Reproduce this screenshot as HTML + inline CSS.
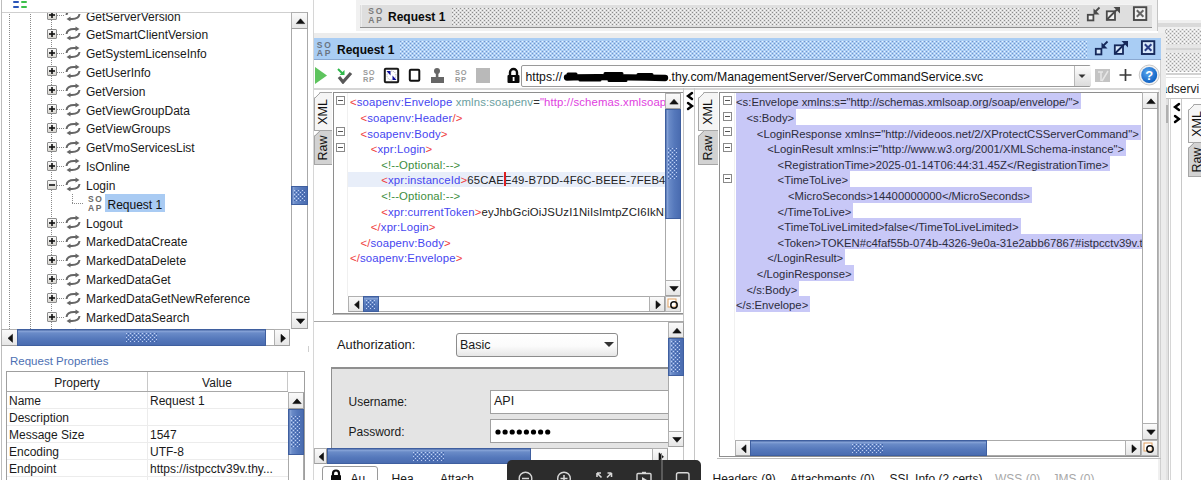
<!DOCTYPE html><html><head><meta charset="utf-8"><style>
html,body{margin:0;padding:0;width:1201px;height:480px;overflow:hidden;background:#fff;}
body{position:relative;font-family:"Liberation Sans",sans-serif;}
.r{position:absolute;}
.t{position:absolute;white-space:nowrap;}
.grip{background-image:radial-gradient(circle at 1px 1px,rgba(255,255,255,0.75) 0.7px,transparent 1px);background-size:3px 3px;}
</style></head><body>
<div class="r" style="left:0px;top:0px;width:313px;height:480px;background:#fff;"></div>
<div class="r" style="left:1px;top:0px;width:1px;height:480px;background:#bdbdbd;"></div>
<div class="r" style="left:13px;top:1px;width:6px;height:2px;background:#2a55b8;border-radius:1px;"></div>
<div class="r" style="left:21px;top:1px;width:6px;height:2px;background:#3cc04a;border-radius:1px;"></div>
<div class="r" style="left:13px;top:5.5px;width:6px;height:2px;background:#2a55b8;border-radius:1px;"></div>
<div class="r" style="left:21px;top:5.5px;width:6px;height:2px;background:#3cc04a;border-radius:1px;"></div>
<div class="r" style="left:2px;top:12px;width:289px;height:1px;background:#cfcfcf;"></div>
<div class="r" style="left:2px;top:13px;width:289px;height:316px;overflow:hidden;">
<div class="r" style="left:7px;top:-13px;width:1px;height:340px;background:repeating-linear-gradient(#8a8a8a 0 1px,transparent 1px 2px);"></div>
<div class="r" style="left:28px;top:-13px;width:1px;height:340px;background:repeating-linear-gradient(#8a8a8a 0 1px,transparent 1px 2px);"></div>
<div class="r" style="left:49px;top:-13px;width:1px;height:340px;background:repeating-linear-gradient(#8a8a8a 0 1px,transparent 1px 2px);"></div>
<div class="r" style="left:45px;top:-3px;width:10px;height:10px;background:linear-gradient(#fafafa,#d8d6d0);border:1px solid #8c8c8c;border-radius:1px;box-sizing:border-box;"></div>
<svg class="r" style="left:45px;top:-3px;" width="10" height="10" viewBox="0 0 10 10"><path d="M2,5 H8" stroke="#111" stroke-width="1.6"/><path d="M5,2 V8" stroke="#111" stroke-width="1.6"/></svg>
<div class="r" style="left:55px;top:2px;width:8px;height:1px;background:repeating-linear-gradient(90deg,#8a8a8a 0 1px,transparent 1px 2px);"></div>
<svg class="r" style="left:63px;top:-5.625px;" width="16" height="15" viewBox="0 0 16 15"><path d="M1.5,8 C2,4 5,3 9,3 L11,3" stroke="#666" stroke-width="2" fill="none"/><polygon points="10.5,0.5 14.5,3 10.5,5.5" fill="#666"/><path d="M14.5,7 C14,11 11,12 7,12 L5,12" stroke="#666" stroke-width="2" fill="none"/><polygon points="5.5,9.5 1.5,12 5.5,14.5" fill="#666"/></svg>
<div class="t" style="left:84px;top:-2.48px;font-size:12px;line-height:12px;color:#1a1a1a;">GetServerVersion</div>
<div class="r" style="left:45px;top:16px;width:10px;height:10px;background:linear-gradient(#fafafa,#d8d6d0);border:1px solid #8c8c8c;border-radius:1px;box-sizing:border-box;"></div>
<svg class="r" style="left:45px;top:16px;" width="10" height="10" viewBox="0 0 10 10"><path d="M2,5 H8" stroke="#111" stroke-width="1.6"/><path d="M5,2 V8" stroke="#111" stroke-width="1.6"/></svg>
<div class="r" style="left:55px;top:21px;width:8px;height:1px;background:repeating-linear-gradient(90deg,#8a8a8a 0 1px,transparent 1px 2px);"></div>
<svg class="r" style="left:63px;top:13.25px;" width="16" height="15" viewBox="0 0 16 15"><path d="M1.5,8 C2,4 5,3 9,3 L11,3" stroke="#666" stroke-width="2" fill="none"/><polygon points="10.5,0.5 14.5,3 10.5,5.5" fill="#666"/><path d="M14.5,7 C14,11 11,12 7,12 L5,12" stroke="#666" stroke-width="2" fill="none"/><polygon points="5.5,9.5 1.5,12 5.5,14.5" fill="#666"/></svg>
<div class="t" style="left:84px;top:16.34px;font-size:12px;line-height:12px;color:#1a1a1a;">GetSmartClientVersion</div>
<div class="r" style="left:45px;top:35px;width:10px;height:10px;background:linear-gradient(#fafafa,#d8d6d0);border:1px solid #8c8c8c;border-radius:1px;box-sizing:border-box;"></div>
<svg class="r" style="left:45px;top:35px;" width="10" height="10" viewBox="0 0 10 10"><path d="M2,5 H8" stroke="#111" stroke-width="1.6"/><path d="M5,2 V8" stroke="#111" stroke-width="1.6"/></svg>
<div class="r" style="left:55px;top:40px;width:8px;height:1px;background:repeating-linear-gradient(90deg,#8a8a8a 0 1px,transparent 1px 2px);"></div>
<svg class="r" style="left:63px;top:32.125px;" width="16" height="15" viewBox="0 0 16 15"><path d="M1.5,8 C2,4 5,3 9,3 L11,3" stroke="#666" stroke-width="2" fill="none"/><polygon points="10.5,0.5 14.5,3 10.5,5.5" fill="#666"/><path d="M14.5,7 C14,11 11,12 7,12 L5,12" stroke="#666" stroke-width="2" fill="none"/><polygon points="5.5,9.5 1.5,12 5.5,14.5" fill="#666"/></svg>
<div class="t" style="left:84px;top:35.16px;font-size:12px;line-height:12px;color:#1a1a1a;">GetSystemLicenseInfo</div>
<div class="r" style="left:45px;top:53px;width:10px;height:10px;background:linear-gradient(#fafafa,#d8d6d0);border:1px solid #8c8c8c;border-radius:1px;box-sizing:border-box;"></div>
<svg class="r" style="left:45px;top:53px;" width="10" height="10" viewBox="0 0 10 10"><path d="M2,5 H8" stroke="#111" stroke-width="1.6"/><path d="M5,2 V8" stroke="#111" stroke-width="1.6"/></svg>
<div class="r" style="left:55px;top:59px;width:8px;height:1px;background:repeating-linear-gradient(90deg,#8a8a8a 0 1px,transparent 1px 2px);"></div>
<svg class="r" style="left:63px;top:51.0px;" width="16" height="15" viewBox="0 0 16 15"><path d="M1.5,8 C2,4 5,3 9,3 L11,3" stroke="#666" stroke-width="2" fill="none"/><polygon points="10.5,0.5 14.5,3 10.5,5.5" fill="#666"/><path d="M14.5,7 C14,11 11,12 7,12 L5,12" stroke="#666" stroke-width="2" fill="none"/><polygon points="5.5,9.5 1.5,12 5.5,14.5" fill="#666"/></svg>
<div class="t" style="left:84px;top:53.98px;font-size:12px;line-height:12px;color:#1a1a1a;">GetUserInfo</div>
<div class="r" style="left:45px;top:72px;width:10px;height:10px;background:linear-gradient(#fafafa,#d8d6d0);border:1px solid #8c8c8c;border-radius:1px;box-sizing:border-box;"></div>
<svg class="r" style="left:45px;top:72px;" width="10" height="10" viewBox="0 0 10 10"><path d="M2,5 H8" stroke="#111" stroke-width="1.6"/><path d="M5,2 V8" stroke="#111" stroke-width="1.6"/></svg>
<div class="r" style="left:55px;top:77px;width:8px;height:1px;background:repeating-linear-gradient(90deg,#8a8a8a 0 1px,transparent 1px 2px);"></div>
<svg class="r" style="left:63px;top:69.875px;" width="16" height="15" viewBox="0 0 16 15"><path d="M1.5,8 C2,4 5,3 9,3 L11,3" stroke="#666" stroke-width="2" fill="none"/><polygon points="10.5,0.5 14.5,3 10.5,5.5" fill="#666"/><path d="M14.5,7 C14,11 11,12 7,12 L5,12" stroke="#666" stroke-width="2" fill="none"/><polygon points="5.5,9.5 1.5,12 5.5,14.5" fill="#666"/></svg>
<div class="t" style="left:84px;top:72.80px;font-size:12px;line-height:12px;color:#1a1a1a;">GetVersion</div>
<div class="r" style="left:45px;top:91px;width:10px;height:10px;background:linear-gradient(#fafafa,#d8d6d0);border:1px solid #8c8c8c;border-radius:1px;box-sizing:border-box;"></div>
<svg class="r" style="left:45px;top:91px;" width="10" height="10" viewBox="0 0 10 10"><path d="M2,5 H8" stroke="#111" stroke-width="1.6"/><path d="M5,2 V8" stroke="#111" stroke-width="1.6"/></svg>
<div class="r" style="left:55px;top:96px;width:8px;height:1px;background:repeating-linear-gradient(90deg,#8a8a8a 0 1px,transparent 1px 2px);"></div>
<svg class="r" style="left:63px;top:88.75px;" width="16" height="15" viewBox="0 0 16 15"><path d="M1.5,8 C2,4 5,3 9,3 L11,3" stroke="#666" stroke-width="2" fill="none"/><polygon points="10.5,0.5 14.5,3 10.5,5.5" fill="#666"/><path d="M14.5,7 C14,11 11,12 7,12 L5,12" stroke="#666" stroke-width="2" fill="none"/><polygon points="5.5,9.5 1.5,12 5.5,14.5" fill="#666"/></svg>
<div class="t" style="left:84px;top:91.62px;font-size:12px;line-height:12px;color:#1a1a1a;">GetViewGroupData</div>
<div class="r" style="left:45px;top:110px;width:10px;height:10px;background:linear-gradient(#fafafa,#d8d6d0);border:1px solid #8c8c8c;border-radius:1px;box-sizing:border-box;"></div>
<svg class="r" style="left:45px;top:110px;" width="10" height="10" viewBox="0 0 10 10"><path d="M2,5 H8" stroke="#111" stroke-width="1.6"/><path d="M5,2 V8" stroke="#111" stroke-width="1.6"/></svg>
<div class="r" style="left:55px;top:115px;width:8px;height:1px;background:repeating-linear-gradient(90deg,#8a8a8a 0 1px,transparent 1px 2px);"></div>
<svg class="r" style="left:63px;top:107.625px;" width="16" height="15" viewBox="0 0 16 15"><path d="M1.5,8 C2,4 5,3 9,3 L11,3" stroke="#666" stroke-width="2" fill="none"/><polygon points="10.5,0.5 14.5,3 10.5,5.5" fill="#666"/><path d="M14.5,7 C14,11 11,12 7,12 L5,12" stroke="#666" stroke-width="2" fill="none"/><polygon points="5.5,9.5 1.5,12 5.5,14.5" fill="#666"/></svg>
<div class="t" style="left:84px;top:110.44px;font-size:12px;line-height:12px;color:#1a1a1a;">GetViewGroups</div>
<div class="r" style="left:45px;top:129px;width:10px;height:10px;background:linear-gradient(#fafafa,#d8d6d0);border:1px solid #8c8c8c;border-radius:1px;box-sizing:border-box;"></div>
<svg class="r" style="left:45px;top:129px;" width="10" height="10" viewBox="0 0 10 10"><path d="M2,5 H8" stroke="#111" stroke-width="1.6"/><path d="M5,2 V8" stroke="#111" stroke-width="1.6"/></svg>
<div class="r" style="left:55px;top:134px;width:8px;height:1px;background:repeating-linear-gradient(90deg,#8a8a8a 0 1px,transparent 1px 2px);"></div>
<svg class="r" style="left:63px;top:126.5px;" width="16" height="15" viewBox="0 0 16 15"><path d="M1.5,8 C2,4 5,3 9,3 L11,3" stroke="#666" stroke-width="2" fill="none"/><polygon points="10.5,0.5 14.5,3 10.5,5.5" fill="#666"/><path d="M14.5,7 C14,11 11,12 7,12 L5,12" stroke="#666" stroke-width="2" fill="none"/><polygon points="5.5,9.5 1.5,12 5.5,14.5" fill="#666"/></svg>
<div class="t" style="left:84px;top:129.26px;font-size:12px;line-height:12px;color:#1a1a1a;">GetVmoServicesList</div>
<div class="r" style="left:45px;top:148px;width:10px;height:10px;background:linear-gradient(#fafafa,#d8d6d0);border:1px solid #8c8c8c;border-radius:1px;box-sizing:border-box;"></div>
<svg class="r" style="left:45px;top:148px;" width="10" height="10" viewBox="0 0 10 10"><path d="M2,5 H8" stroke="#111" stroke-width="1.6"/><path d="M5,2 V8" stroke="#111" stroke-width="1.6"/></svg>
<div class="r" style="left:55px;top:153px;width:8px;height:1px;background:repeating-linear-gradient(90deg,#8a8a8a 0 1px,transparent 1px 2px);"></div>
<svg class="r" style="left:63px;top:145.375px;" width="16" height="15" viewBox="0 0 16 15"><path d="M1.5,8 C2,4 5,3 9,3 L11,3" stroke="#666" stroke-width="2" fill="none"/><polygon points="10.5,0.5 14.5,3 10.5,5.5" fill="#666"/><path d="M14.5,7 C14,11 11,12 7,12 L5,12" stroke="#666" stroke-width="2" fill="none"/><polygon points="5.5,9.5 1.5,12 5.5,14.5" fill="#666"/></svg>
<div class="t" style="left:84px;top:148.08px;font-size:12px;line-height:12px;color:#1a1a1a;">IsOnline</div>
<div class="r" style="left:45px;top:167px;width:10px;height:10px;background:linear-gradient(#fafafa,#d8d6d0);border:1px solid #8c8c8c;border-radius:1px;box-sizing:border-box;"></div>
<svg class="r" style="left:45px;top:167px;" width="10" height="10" viewBox="0 0 10 10"><path d="M2,5 H8" stroke="#111" stroke-width="1.6"/></svg>
<div class="r" style="left:55px;top:172px;width:8px;height:1px;background:repeating-linear-gradient(90deg,#8a8a8a 0 1px,transparent 1px 2px);"></div>
<svg class="r" style="left:63px;top:164.25px;" width="16" height="15" viewBox="0 0 16 15"><path d="M1.5,8 C2,4 5,3 9,3 L11,3" stroke="#666" stroke-width="2" fill="none"/><polygon points="10.5,0.5 14.5,3 10.5,5.5" fill="#666"/><path d="M14.5,7 C14,11 11,12 7,12 L5,12" stroke="#666" stroke-width="2" fill="none"/><polygon points="5.5,9.5 1.5,12 5.5,14.5" fill="#666"/></svg>
<div class="t" style="left:84px;top:166.90px;font-size:12px;line-height:12px;color:#1a1a1a;">Login</div>
<div class="r" style="left:70px;top:180.625px;width:1px;height:10px;background:repeating-linear-gradient(#8a8a8a 0 1px,transparent 1px 2px);"></div>
<div class="r" style="left:70px;top:190.125px;width:12px;height:1px;background:repeating-linear-gradient(90deg,#8a8a8a 0 1px,transparent 1px 2px);"></div>
<div class="t " style="left:86px;top:182.13px;font-size:8.5px;line-height:8.5px;color:#6a6a6a;font-weight:bold;letter-spacing:1.7px;">SO</div>
<div class="t " style="left:86px;top:190.63px;font-size:8.5px;line-height:8.5px;color:#6a6a6a;font-weight:bold;letter-spacing:1.7px;">AP</div>
<div class="r" style="left:103px;top:180.625px;width:59.5px;height:18.5px;background:#a9cbf3;"></div>
<div class="t" style="left:105.5px;top:185.97px;font-size:12px;line-height:12px;color:#111;">Request 1</div>
<div class="r" style="left:45px;top:205px;width:10px;height:10px;background:linear-gradient(#fafafa,#d8d6d0);border:1px solid #8c8c8c;border-radius:1px;box-sizing:border-box;"></div>
<svg class="r" style="left:45px;top:205px;" width="10" height="10" viewBox="0 0 10 10"><path d="M2,5 H8" stroke="#111" stroke-width="1.6"/><path d="M5,2 V8" stroke="#111" stroke-width="1.6"/></svg>
<div class="r" style="left:55px;top:209px;width:8px;height:1px;background:repeating-linear-gradient(90deg,#8a8a8a 0 1px,transparent 1px 2px);"></div>
<svg class="r" style="left:63px;top:202.0px;" width="16" height="15" viewBox="0 0 16 15"><path d="M1.5,8 C2,4 5,3 9,3 L11,3" stroke="#666" stroke-width="2" fill="none"/><polygon points="10.5,0.5 14.5,3 10.5,5.5" fill="#666"/><path d="M14.5,7 C14,11 11,12 7,12 L5,12" stroke="#666" stroke-width="2" fill="none"/><polygon points="5.5,9.5 1.5,12 5.5,14.5" fill="#666"/></svg>
<div class="t" style="left:84px;top:204.54px;font-size:12px;line-height:12px;color:#1a1a1a;">Logout</div>
<div class="r" style="left:45px;top:223px;width:10px;height:10px;background:linear-gradient(#fafafa,#d8d6d0);border:1px solid #8c8c8c;border-radius:1px;box-sizing:border-box;"></div>
<svg class="r" style="left:45px;top:223px;" width="10" height="10" viewBox="0 0 10 10"><path d="M2,5 H8" stroke="#111" stroke-width="1.6"/><path d="M5,2 V8" stroke="#111" stroke-width="1.6"/></svg>
<div class="r" style="left:55px;top:228px;width:8px;height:1px;background:repeating-linear-gradient(90deg,#8a8a8a 0 1px,transparent 1px 2px);"></div>
<svg class="r" style="left:63px;top:220.875px;" width="16" height="15" viewBox="0 0 16 15"><path d="M1.5,8 C2,4 5,3 9,3 L11,3" stroke="#666" stroke-width="2" fill="none"/><polygon points="10.5,0.5 14.5,3 10.5,5.5" fill="#666"/><path d="M14.5,7 C14,11 11,12 7,12 L5,12" stroke="#666" stroke-width="2" fill="none"/><polygon points="5.5,9.5 1.5,12 5.5,14.5" fill="#666"/></svg>
<div class="t" style="left:84px;top:223.36px;font-size:12px;line-height:12px;color:#1a1a1a;">MarkedDataCreate</div>
<div class="r" style="left:45px;top:242px;width:10px;height:10px;background:linear-gradient(#fafafa,#d8d6d0);border:1px solid #8c8c8c;border-radius:1px;box-sizing:border-box;"></div>
<svg class="r" style="left:45px;top:242px;" width="10" height="10" viewBox="0 0 10 10"><path d="M2,5 H8" stroke="#111" stroke-width="1.6"/><path d="M5,2 V8" stroke="#111" stroke-width="1.6"/></svg>
<div class="r" style="left:55px;top:247px;width:8px;height:1px;background:repeating-linear-gradient(90deg,#8a8a8a 0 1px,transparent 1px 2px);"></div>
<svg class="r" style="left:63px;top:239.75px;" width="16" height="15" viewBox="0 0 16 15"><path d="M1.5,8 C2,4 5,3 9,3 L11,3" stroke="#666" stroke-width="2" fill="none"/><polygon points="10.5,0.5 14.5,3 10.5,5.5" fill="#666"/><path d="M14.5,7 C14,11 11,12 7,12 L5,12" stroke="#666" stroke-width="2" fill="none"/><polygon points="5.5,9.5 1.5,12 5.5,14.5" fill="#666"/></svg>
<div class="t" style="left:84px;top:242.18px;font-size:12px;line-height:12px;color:#1a1a1a;">MarkedDataDelete</div>
<div class="r" style="left:45px;top:261px;width:10px;height:10px;background:linear-gradient(#fafafa,#d8d6d0);border:1px solid #8c8c8c;border-radius:1px;box-sizing:border-box;"></div>
<svg class="r" style="left:45px;top:261px;" width="10" height="10" viewBox="0 0 10 10"><path d="M2,5 H8" stroke="#111" stroke-width="1.6"/><path d="M5,2 V8" stroke="#111" stroke-width="1.6"/></svg>
<div class="r" style="left:55px;top:266px;width:8px;height:1px;background:repeating-linear-gradient(90deg,#8a8a8a 0 1px,transparent 1px 2px);"></div>
<svg class="r" style="left:63px;top:258.625px;" width="16" height="15" viewBox="0 0 16 15"><path d="M1.5,8 C2,4 5,3 9,3 L11,3" stroke="#666" stroke-width="2" fill="none"/><polygon points="10.5,0.5 14.5,3 10.5,5.5" fill="#666"/><path d="M14.5,7 C14,11 11,12 7,12 L5,12" stroke="#666" stroke-width="2" fill="none"/><polygon points="5.5,9.5 1.5,12 5.5,14.5" fill="#666"/></svg>
<div class="t" style="left:84px;top:261.00px;font-size:12px;line-height:12px;color:#1a1a1a;">MarkedDataGet</div>
<div class="r" style="left:45px;top:280px;width:10px;height:10px;background:linear-gradient(#fafafa,#d8d6d0);border:1px solid #8c8c8c;border-radius:1px;box-sizing:border-box;"></div>
<svg class="r" style="left:45px;top:280px;" width="10" height="10" viewBox="0 0 10 10"><path d="M2,5 H8" stroke="#111" stroke-width="1.6"/><path d="M5,2 V8" stroke="#111" stroke-width="1.6"/></svg>
<div class="r" style="left:55px;top:285px;width:8px;height:1px;background:repeating-linear-gradient(90deg,#8a8a8a 0 1px,transparent 1px 2px);"></div>
<svg class="r" style="left:63px;top:277.5px;" width="16" height="15" viewBox="0 0 16 15"><path d="M1.5,8 C2,4 5,3 9,3 L11,3" stroke="#666" stroke-width="2" fill="none"/><polygon points="10.5,0.5 14.5,3 10.5,5.5" fill="#666"/><path d="M14.5,7 C14,11 11,12 7,12 L5,12" stroke="#666" stroke-width="2" fill="none"/><polygon points="5.5,9.5 1.5,12 5.5,14.5" fill="#666"/></svg>
<div class="t" style="left:84px;top:279.82px;font-size:12px;line-height:12px;color:#1a1a1a;">MarkedDataGetNewReference</div>
<div class="r" style="left:45px;top:299px;width:10px;height:10px;background:linear-gradient(#fafafa,#d8d6d0);border:1px solid #8c8c8c;border-radius:1px;box-sizing:border-box;"></div>
<svg class="r" style="left:45px;top:299px;" width="10" height="10" viewBox="0 0 10 10"><path d="M2,5 H8" stroke="#111" stroke-width="1.6"/><path d="M5,2 V8" stroke="#111" stroke-width="1.6"/></svg>
<div class="r" style="left:55px;top:304px;width:8px;height:1px;background:repeating-linear-gradient(90deg,#8a8a8a 0 1px,transparent 1px 2px);"></div>
<svg class="r" style="left:63px;top:296.375px;" width="16" height="15" viewBox="0 0 16 15"><path d="M1.5,8 C2,4 5,3 9,3 L11,3" stroke="#666" stroke-width="2" fill="none"/><polygon points="10.5,0.5 14.5,3 10.5,5.5" fill="#666"/><path d="M14.5,7 C14,11 11,12 7,12 L5,12" stroke="#666" stroke-width="2" fill="none"/><polygon points="5.5,9.5 1.5,12 5.5,14.5" fill="#666"/></svg>
<div class="t" style="left:84px;top:298.64px;font-size:12px;line-height:12px;color:#1a1a1a;">MarkedDataSearch</div>
<div class="r" style="left:45px;top:318px;width:10px;height:10px;background:linear-gradient(#fafafa,#d8d6d0);border:1px solid #8c8c8c;border-radius:1px;box-sizing:border-box;"></div>
<svg class="r" style="left:45px;top:318px;" width="10" height="10" viewBox="0 0 10 10"><path d="M2,5 H8" stroke="#111" stroke-width="1.6"/><path d="M5,2 V8" stroke="#111" stroke-width="1.6"/></svg>
<div class="r" style="left:55px;top:323px;width:8px;height:1px;background:repeating-linear-gradient(90deg,#8a8a8a 0 1px,transparent 1px 2px);"></div>
<svg class="r" style="left:63px;top:315.25px;" width="16" height="15" viewBox="0 0 16 15"><path d="M1.5,8 C2,4 5,3 9,3 L11,3" stroke="#666" stroke-width="2" fill="none"/><polygon points="10.5,0.5 14.5,3 10.5,5.5" fill="#666"/><path d="M14.5,7 C14,11 11,12 7,12 L5,12" stroke="#666" stroke-width="2" fill="none"/><polygon points="5.5,9.5 1.5,12 5.5,14.5" fill="#666"/></svg>
<div class="t" style="left:84px;top:317.46px;font-size:12px;line-height:12px;color:#1a1a1a;">MarkedDataUpdate</div>
</div>
<div class="r" style="left:291px;top:12px;width:17px;height:17px;background:linear-gradient(#fafafa,#e6e6e6);border:1px solid #b0b0b0;border-right-color:#a0a0a0;border-bottom-color:#a0a0a0;box-sizing:border-box;"></div>
<svg class="r" style="left:291px;top:12px;" width="17" height="17" viewBox="0 0 17 17"><polygon points="5.3,11.600000000000001 13.7,11.600000000000001 9.5,6.800000000000001" fill="#111" stroke="#111" stroke-width="0.6" stroke-linejoin="round"/></svg>
<div class="r" style="left:291px;top:29px;width:17px;height:283px;background:#fff;border:1px solid #aaaaaa;border-top:none;border-bottom:none;box-sizing:border-box;"></div>
<div class="r" style="left:291px;top:186px;width:17px;height:19px;background:linear-gradient(90deg,#3f5f9f 0,#8aa6d9 1px,#6a8bc8 3px,#5578bb 60%,#4a6cb0 100%);border:1px solid #3f5f9f;box-sizing:border-box;"></div>
<svg class="r" style="left:294px;top:190px" width="11" height="12"><defs><pattern id="g1" width="4" height="4" patternUnits="userSpaceOnUse"><rect x="0" y="0" width="1" height="1" fill="#c0d0f4"/><rect x="2" y="2" width="1" height="1" fill="#c0d0f4"/><rect x="2" y="0" width="1" height="1" fill="#3f5fa5"/><rect x="0" y="2" width="1" height="1" fill="#3f5fa5"/></pattern></defs><rect width="11" height="12" fill="url(#g1)"/></svg>
<div class="r" style="left:291px;top:312px;width:17px;height:17px;background:linear-gradient(#fafafa,#e6e6e6);border:1px solid #b0b0b0;border-right-color:#a0a0a0;border-bottom-color:#a0a0a0;box-sizing:border-box;"></div>
<svg class="r" style="left:291px;top:312px;" width="17" height="17" viewBox="0 0 17 17"><polygon points="5.3,7.000000000000001 13.7,7.000000000000001 9.5,11.8" fill="#111" stroke="#111" stroke-width="0.6" stroke-linejoin="round"/></svg>
<div class="r" style="left:1px;top:329px;width:17px;height:17px;background:linear-gradient(#fafafa,#e6e6e6);border:1px solid #b0b0b0;border-right-color:#a0a0a0;border-bottom-color:#a0a0a0;box-sizing:border-box;"></div>
<svg class="r" style="left:1px;top:329px;" width="17" height="17" viewBox="0 0 17 17"><polygon points="11.5,5.300000000000001 11.5,13.3 7.0,9.3" fill="#111" stroke="#111" stroke-width="0.6" stroke-linejoin="round"/></svg>
<div class="r" style="left:17px;top:329px;width:249px;height:17px;background:linear-gradient(#3f5f9f 0,#8aa6d9 1px,#6a8bc8 3px,#5578bb 60%,#4a6cb0 100%);border:1px solid #3f5f9f;box-sizing:border-box;"></div>
<svg class="r" style="left:126px;top:333px" width="32" height="10"><defs><pattern id="g2" width="4" height="4" patternUnits="userSpaceOnUse"><rect x="0" y="0" width="1" height="1" fill="#c0d0f4"/><rect x="2" y="2" width="1" height="1" fill="#c0d0f4"/><rect x="2" y="0" width="1" height="1" fill="#3f5fa5"/><rect x="0" y="2" width="1" height="1" fill="#3f5fa5"/></pattern></defs><rect width="32" height="10" fill="url(#g2)"/></svg>
<div class="r" style="left:266px;top:329px;width:8px;height:17px;background:#fff;border:1px solid #aaaaaa;border-left:none;border-right:none;box-sizing:border-box;"></div>
<div class="r" style="left:274px;top:329px;width:16px;height:17px;background:linear-gradient(#fafafa,#e6e6e6);border:1px solid #b0b0b0;border-right-color:#a0a0a0;border-bottom-color:#a0a0a0;box-sizing:border-box;"></div>
<svg class="r" style="left:274px;top:329px;" width="16" height="17" viewBox="0 0 16 17"><polygon points="7.0,5.300000000000001 7.0,13.3 11.5,9.3" fill="#111" stroke="#111" stroke-width="0.6" stroke-linejoin="round"/></svg>
<div class="r" style="left:308px;top:346px;width:1px;height:6px;background:#cfcfcf;"></div>
<div class="r" style="left:313px;top:0px;width:1px;height:480px;background:#d6d6d6;"></div>
<div class="t " style="left:10px;top:355.77px;font-size:11.5px;line-height:11.5px;color:#4d70b3;font-weight:normal;">Request Properties</div>
<div class="r" style="left:6px;top:371px;width:299px;height:120px;border:1px solid #9f9f9f;background:#fff;box-sizing:border-box;"></div>
<div class="r" style="left:7px;top:391px;width:281px;height:1px;background:#a8a8a8;"></div>
<div class="r" style="left:147px;top:372px;width:1px;height:19px;background:#c8c8c8;"></div>
<div class="r" style="left:287px;top:372px;width:1px;height:19px;background:#c8c8c8;"></div>
<div class="t " style="left:7px;top:376.84px;font-size:12px;line-height:12px;color:#1a1a1a;font-weight:normal;"><div style="width:140px;text-align:center">Property</div></div>
<div class="t " style="left:147px;top:376.84px;font-size:12px;line-height:12px;color:#1a1a1a;font-weight:normal;"><div style="width:140px;text-align:center">Value</div></div>
<div class="r" style="left:7px;top:408px;width:281px;height:1px;background:#ececec;"></div>
<div class="t " style="left:9px;top:394.84px;font-size:12px;line-height:12px;color:#1a1a1a;font-weight:normal;">Name</div>
<div class="t " style="left:150px;top:394.84px;font-size:12px;line-height:12px;color:#1a1a1a;font-weight:normal;">Request 1</div>
<div class="r" style="left:7px;top:425px;width:281px;height:1px;background:#ececec;"></div>
<div class="t " style="left:9px;top:411.84px;font-size:12px;line-height:12px;color:#1a1a1a;font-weight:normal;">Description</div>
<div class="t " style="left:150px;top:411.84px;font-size:12px;line-height:12px;color:#1a1a1a;font-weight:normal;"></div>
<div class="r" style="left:7px;top:442px;width:281px;height:1px;background:#ececec;"></div>
<div class="t " style="left:9px;top:428.84px;font-size:12px;line-height:12px;color:#1a1a1a;font-weight:normal;">Message Size</div>
<div class="t " style="left:150px;top:428.84px;font-size:12px;line-height:12px;color:#1a1a1a;font-weight:normal;">1547</div>
<div class="r" style="left:7px;top:459px;width:281px;height:1px;background:#ececec;"></div>
<div class="t " style="left:9px;top:445.84px;font-size:12px;line-height:12px;color:#1a1a1a;font-weight:normal;">Encoding</div>
<div class="t " style="left:150px;top:445.84px;font-size:12px;line-height:12px;color:#1a1a1a;font-weight:normal;">UTF-8</div>
<div class="r" style="left:7px;top:476px;width:281px;height:1px;background:#ececec;"></div>
<div class="t " style="left:9px;top:462.84px;font-size:12px;line-height:12px;color:#1a1a1a;font-weight:normal;">Endpoint</div>
<div class="t " style="left:150px;top:462.84px;font-size:12px;line-height:12px;color:#1a1a1a;font-weight:normal;">https://istpcctv39v.thy...</div>
<div class="r" style="left:147px;top:392px;width:1px;height:90px;background:#ececec;"></div>
<div class="r" style="left:288px;top:392px;width:16px;height:17px;background:linear-gradient(#fafafa,#e6e6e6);border:1px solid #b0b0b0;border-right-color:#a0a0a0;border-bottom-color:#a0a0a0;box-sizing:border-box;"></div>
<svg class="r" style="left:288px;top:392px;" width="16" height="17" viewBox="0 0 16 17"><polygon points="4.8,11.600000000000001 13.2,11.600000000000001 9.0,6.800000000000001" fill="#111" stroke="#111" stroke-width="0.6" stroke-linejoin="round"/></svg>
<div class="r" style="left:288px;top:409px;width:16px;height:46px;background:linear-gradient(90deg,#3f5f9f 0,#8aa6d9 1px,#6a8bc8 3px,#5578bb 60%,#4a6cb0 100%);border:1px solid #3f5f9f;box-sizing:border-box;"></div>
<svg class="r" style="left:291px;top:416px" width="10" height="32"><defs><pattern id="g3" width="4" height="4" patternUnits="userSpaceOnUse"><rect x="0" y="0" width="1" height="1" fill="#c0d0f4"/><rect x="2" y="2" width="1" height="1" fill="#c0d0f4"/><rect x="2" y="0" width="1" height="1" fill="#3f5fa5"/><rect x="0" y="2" width="1" height="1" fill="#3f5fa5"/></pattern></defs><rect width="10" height="32" fill="url(#g3)"/></svg>
<div class="r" style="left:288px;top:455px;width:16px;height:30px;background:#fff;border:1px solid #aaaaaa;border-top:none;border-bottom:none;box-sizing:border-box;"></div>
<div class="r" style="left:314px;top:0px;width:887px;height:480px;background:#fff;"></div>
<div class="r" style="left:356px;top:0px;width:802px;height:31px;background:#f1f1f1;"></div>
<div class="r" style="left:1157px;top:0px;width:1px;height:31px;background:#c4c4c4;"></div>
<div class="r" style="left:360px;top:4px;width:792px;height:24px;background:#dedede;border-top:1px solid #f4f4f4;border-bottom:1px solid #8f8f8f;box-sizing:border-box;"></div>
<div class="r" style="left:361px;top:5px;width:1px;height:22px;background:#ededed;"></div>
<div class="t " style="left:368.3px;top:7.40px;font-size:8.5px;line-height:8.5px;color:#7a7a7a;font-weight:bold;letter-spacing:1.7px;">SO</div>
<div class="t " style="left:368.3px;top:15.60px;font-size:8.5px;line-height:8.5px;color:#7a7a7a;font-weight:bold;letter-spacing:1.7px;">AP</div>
<div class="t " style="left:388px;top:10.54px;font-size:12px;line-height:12px;color:#0a0a0a;font-weight:bold;">Request 1</div>
<svg class="r" style="left:452px;top:8px" width="628" height="17"><defs><pattern id="p4" width="4" height="4" patternUnits="userSpaceOnUse"><rect width="4" height="4" fill="#dddddd"/><rect x="0" y="0" width="1" height="1" fill="#8c8c8c"/><rect x="2" y="2" width="1" height="1" fill="#8c8c8c"/><rect x="2" y="0" width="1" height="1" fill="#f8f8f8"/><rect x="0" y="2" width="1" height="1" fill="#f8f8f8"/></pattern></defs><rect width="628" height="17" fill="url(#p4)"/></svg>
<svg class="r" style="left:1086px;top:6px;" width="72" height="18" viewBox="0 0 72 18"><rect x="1.8" y="8.8" width="5.6" height="5.6" fill="#f2f2f2" stroke="#4a4a4a" stroke-width="1.8"/><path d="M13.5,1.5 L8.5,6.5" stroke="#4a4a4a" stroke-width="1.8"/><polygon points="7.5,2.5 7.5,8.5 13.5,8.5" fill="#4a4a4a"/><rect x="20.8" y="5.3" width="8.2" height="8.6" fill="#f2f2f2" stroke="#4a4a4a" stroke-width="1.8"/><path d="M20.5,14 L31,3.5" stroke="#4a4a4a" stroke-width="1.8"/><polygon points="27.5,1 34,1 34,7.5" fill="#4a4a4a"/><rect x="47.9" y="1.2" width="12.4" height="12.8" fill="#f2f2f2" stroke="#4a4a4a" stroke-width="1.9"/><path d="M50.8,4.2 L57.4,10.8 M57.4,4.2 L50.8,10.8" stroke="#666" stroke-width="2"/></svg>
<div class="r" style="left:1158px;top:20px;width:43px;height:460px;background:#f0f0f0;"></div>
<div class="r" style="left:1158px;top:23px;width:43px;height:4px;background:#dadada;"></div>
<svg class="r" style="left:1166px;top:29px" width="35" height="16"><defs><pattern id="p5" width="4" height="4" patternUnits="userSpaceOnUse"><rect width="4" height="4" fill="#e2e2e2"/><rect x="0" y="0" width="1" height="1" fill="#a0a0a0"/><rect x="2" y="2" width="1" height="1" fill="#a0a0a0"/><rect x="2" y="0" width="1" height="1" fill="#fdfdfd"/><rect x="0" y="2" width="1" height="1" fill="#fdfdfd"/></pattern></defs><rect width="35" height="16" fill="url(#p5)"/></svg>
<div class="r" style="left:1166px;top:45px;width:35px;height:8px;background:#e6e6e6;"></div>
<div class="r" style="left:1166px;top:48px;width:35px;height:2px;background:#d4d4d4;"></div>
<svg class="r" style="left:1166px;top:53px" width="35" height="19"><defs><pattern id="p6" width="4" height="4" patternUnits="userSpaceOnUse"><rect width="4" height="4" fill="#e2e2e2"/><rect x="0" y="0" width="1" height="1" fill="#a0a0a0"/><rect x="2" y="2" width="1" height="1" fill="#a0a0a0"/><rect x="2" y="0" width="1" height="1" fill="#fdfdfd"/><rect x="0" y="2" width="1" height="1" fill="#fdfdfd"/></pattern></defs><rect width="35" height="19" fill="url(#p6)"/></svg>
<div class="r" style="left:1166px;top:72px;width:35px;height:408px;background:#fff;"></div>
<div class="r" style="left:1166px;top:73px;width:35px;height:2px;background:#d2d2d2;"></div>
<div class="r" style="left:1166px;top:77px;width:35px;height:1px;background:#e4e4e4;"></div>
<div class="r" style="left:1166px;top:78px;width:35px;height:20px;overflow:hidden;">
<div class="t " style="left:-5.5px;top:4.64px;font-size:12px;line-height:12px;color:#1a1a1a;font-weight:normal;">adservi</div>
</div>
<div class="r" style="left:1166px;top:98px;width:35px;height:1px;background:#c4c4c4;"></div>
<div class="r" style="left:1165px;top:30px;width:1px;height:450px;background:#c0c0c0;"></div>
<div class="r" style="left:1166px;top:99px;width:2px;height:381px;background:#e2e2e2;"></div>
<div class="r" style="left:1166px;top:105px;width:2px;height:18px;background:#b0b0b0;"></div>
<div class="r" style="left:1168px;top:99px;width:1px;height:381px;background:#c8c8c8;"></div>
<div class="r" style="left:1170px;top:99px;width:1px;height:381px;background:#d6d6d6;"></div>
<div class="r" style="left:1181px;top:99px;width:1px;height:381px;background:#c8c8c8;"></div>
<svg class="r" style="left:1172px;top:102px;" width="10" height="22" viewBox="0 0 10 22"><path d="M7,2 L3,5 L7,8" stroke="#000" stroke-width="2.4" fill="none" stroke-linecap="round"/><path d="M3,14 L7,17 L3,20" stroke="#000" stroke-width="2.4" fill="none" stroke-linecap="round"/></svg>
<div class="r" style="left:314px;top:33px;width:852px;height:5px;background:#ececec;"></div>
<div class="r" style="left:1161px;top:38px;width:5px;height:442px;background:#ececec;"></div>
<div class="r" style="left:1160px;top:38px;width:1px;height:442px;background:#d0d0d0;"></div>
<div class="r" style="left:314px;top:38px;width:847px;height:22px;background:#a9cdf4;border-bottom:1px solid #8aa8d0;box-sizing:border-box;"></div>
<div class="t " style="left:316.8px;top:40.70px;font-size:8.5px;line-height:8.5px;color:#6a7380;font-weight:bold;letter-spacing:1.7px;">SO</div>
<div class="t " style="left:316.8px;top:48.90px;font-size:8.5px;line-height:8.5px;color:#6a7380;font-weight:bold;letter-spacing:1.7px;">AP</div>
<div class="t " style="left:337px;top:43.84px;font-size:12px;line-height:12px;color:#0a0a0a;font-weight:bold;">Request 1</div>
<svg class="r" style="left:400px;top:41px" width="688" height="18"><defs><pattern id="p7" width="4" height="4" patternUnits="userSpaceOnUse"><rect width="4" height="4" fill="#a9cdf4"/><rect x="0" y="0" width="1" height="1" fill="#7895c8"/><rect x="2" y="2" width="1" height="1" fill="#7895c8"/><rect x="2" y="0" width="1" height="1" fill="#e8f2ff"/><rect x="0" y="2" width="1" height="1" fill="#e8f2ff"/></pattern></defs><rect width="688" height="18" fill="url(#p7)"/></svg>
<svg class="r" style="left:1094px;top:40px;" width="72" height="18" viewBox="0 0 72 18"><rect x="1.8" y="8.8" width="5.6" height="5.6" fill="#d8e8fa" stroke="#15285a" stroke-width="1.8"/><path d="M13.5,1.5 L8.5,6.5" stroke="#15285a" stroke-width="1.8"/><polygon points="7.5,2.5 7.5,8.5 13.5,8.5" fill="#15285a"/><rect x="20.8" y="5.3" width="8.2" height="8.6" fill="#d8e8fa" stroke="#15285a" stroke-width="1.8"/><path d="M20.5,14 L31,3.5" stroke="#15285a" stroke-width="1.8"/><polygon points="27.5,1 34,1 34,7.5" fill="#15285a"/><rect x="47.9" y="1.2" width="12.4" height="12.8" fill="#d8e8fa" stroke="#15285a" stroke-width="1.9"/><path d="M50.8,4.2 L57.4,10.8 M57.4,4.2 L50.8,10.8" stroke="#2a3f88" stroke-width="2"/></svg>
<div class="r" style="left:314px;top:60px;width:846px;height:28px;background:#fff;"></div>
<div class="r" style="left:314px;top:88px;width:846px;height:2px;background:#d6d6d6;"></div>
<svg class="r" style="left:314px;top:66px;" width="14" height="19" viewBox="0 0 14 19"><polygon points="1,1 13,9.5 1,18" fill="#5ec45e"/></svg>
<svg class="r" style="left:336px;top:67px;" width="18" height="17" viewBox="0 0 18 17"><path d="M3,10 L7,15 L15,6" stroke="#585858" stroke-width="3.2" fill="none" stroke-linejoin="miter"/><path d="M2,2 L6.5,6.5" stroke="#2fb84a" stroke-width="2"/><polygon points="3.5,8 8.5,8 8.5,3" fill="#2fb84a"/></svg>
<div class="t " style="left:363px;top:68.65px;font-size:7.5px;line-height:7.5px;color:#9a9a9a;font-weight:bold;">S&#8202;O</div>
<div class="t " style="left:363px;top:75.65px;font-size:7.5px;line-height:7.5px;color:#9a9a9a;font-weight:bold;">R&#8202;P</div>
<svg class="r" style="left:383px;top:67px;" width="17" height="17" viewBox="0 0 17 17"><rect x="1.8" y="1.8" width="13.4" height="13.4" rx="1" fill="#fff" stroke="#1a1a1a" stroke-width="2"/><circle cx="8.5" cy="8.5" r="4.5" fill="none" stroke="#aaa" stroke-width="1" stroke-dasharray="1 1"/><polygon points="3.5,4 7.5,4 7.5,8.5" fill="#0c0c9a"/><polygon points="13.5,13 9.5,13 9.5,8.5" fill="#0c0c9a"/></svg>
<svg class="r" style="left:408px;top:68px;" width="14" height="15" viewBox="0 0 14 15"><rect x="1.8" y="1.8" width="9.5" height="11" rx="1" fill="#fff" stroke="#111" stroke-width="2"/></svg>
<svg class="r" style="left:430px;top:68px;" width="16" height="16" viewBox="0 0 16 16"><circle cx="7" cy="3" r="3" fill="#666"/><rect x="5.8" y="5" width="2.6" height="5" fill="#666"/><rect x="1" y="9" width="13" height="6" fill="#666"/></svg>
<div class="t " style="left:455px;top:68.65px;font-size:7.5px;line-height:7.5px;color:#9a9a9a;font-weight:bold;">S&#8202;O</div>
<div class="t " style="left:455px;top:75.65px;font-size:7.5px;line-height:7.5px;color:#9a9a9a;font-weight:bold;">R&#8202;P</div>
<div class="r" style="left:476px;top:68px;width:14px;height:15px;background:#b9b9b9;"></div>
<svg class="r" style="left:506px;top:67px;" width="16" height="17" viewBox="0 0 16 17"><path d="M4,8 V5.5 A3.5,3.5 0 0 1 11,5.5 V8" stroke="#0a0a0a" stroke-width="2.4" fill="none"/><rect x="1.5" y="8" width="12" height="8" rx="1" fill="#0a0a0a"/><rect x="6.7" y="10" width="1.8" height="4" fill="#fff"/></svg>
<div class="r" style="left:521px;top:65px;width:570px;height:22px;background:#fff;border:1px solid #9a9a9a;border-radius:2px;box-sizing:border-box;"></div>
<div class="r" style="left:1074px;top:66px;width:16px;height:20px;background:linear-gradient(#fdfdfd,#dcdcdc);border-left:1px solid #b8b8b8;"></div>
<svg class="r" style="left:1074px;top:66px;" width="16" height="20" viewBox="0 0 16 20"><polygon points="4.5,8.5 11.5,8.5 8,12" fill="#333"/></svg>
<div class="t " style="left:525.5px;top:70.63px;font-size:12.25px;line-height:12.25px;color:#111;font-weight:normal;">https://</div>
<div class="t " style="left:668.2px;top:70.63px;font-size:12.25px;line-height:12.25px;color:#111;font-weight:normal;">.thy.com/ManagementServer/ServerCommandService.svc</div>
<svg class="r" style="left:560px;top:70px;" width="110" height="16" viewBox="0 0 110 16"><path d="M7,7.5 C30,6.8 60,7 105,8" stroke="#000" stroke-width="6.4" stroke-linecap="round" fill="none"/><path d="M8,4 L16,4 M45,3.5 L62,3.5 M78,4.5 L92,4.5" stroke="#000" stroke-width="3" stroke-linecap="round" fill="none"/><path d="M49,10.5 L66,10.5 M20,10 L40,10" stroke="#000" stroke-width="3" stroke-linecap="round" fill="none"/></svg>
<svg class="r" style="left:1094px;top:68px;" width="18" height="16" viewBox="0 0 18 16"><rect x="1" y="1" width="15" height="13" fill="#c4c4c4"/><path d="M4,4 H9 M7,4 V13 M14,3 L8,13" stroke="#e6e6e6" stroke-width="1.5"/></svg>
<svg class="r" style="left:1118px;top:67px;" width="16" height="16" viewBox="0 0 16 16"><path d="M7.5,2 V14 M1.5,8 H13.5" stroke="#3a3a3a" stroke-width="1.7"/></svg>
<svg class="r" style="left:1138px;top:64px;" width="23" height="23" viewBox="0 0 23 23"><defs><radialGradient id="hg" cx="40%" cy="35%" r="70%"><stop offset="0" stop-color="#5aa8ef"/><stop offset="1" stop-color="#0a5cc0"/></radialGradient></defs><circle cx="11.2" cy="11" r="10" fill="#f2f2f2" stroke="#c8c8c8" stroke-width="1"/><circle cx="11.2" cy="11" r="8" fill="url(#hg)"/><text x="11.2" y="15.5" font-family="Liberation Sans" font-weight="bold" font-size="13" fill="#fff" text-anchor="middle">?</text></svg>
<div class="r" style="left:314px;top:92px;width:18px;height:39px;background:#f5f5f5;border:1px solid #a6a6a6;border-right:none;box-sizing:border-box;clip-path:polygon(0 6px,6px 0,100% 0,100% 100%,0 100%);"></div>
<svg class="r" style="left:314px;top:92px;" width="18" height="39"><path d="M0.5,6.5 L6.5,0.5" stroke="#a6a6a6" stroke-width="1"/></svg>
<div class="t" style="left:323.0px;top:111.5px;font-size:12.5px;line-height:12.5px;color:#111;transform:translate(-50%,-50%) rotate(-90deg);">XML</div>
<div class="r" style="left:314px;top:130px;width:18px;height:35px;background:#d2d2d2;border:1px solid #a6a6a6;border-right:none;box-sizing:border-box;clip-path:polygon(0 6px,6px 0,100% 0,100% 100%,0 100%);"></div>
<svg class="r" style="left:314px;top:130px;" width="18" height="35"><path d="M0.5,6.5 L6.5,0.5" stroke="#a6a6a6" stroke-width="1"/></svg>
<div class="t" style="left:323.0px;top:147.5px;font-size:12.5px;line-height:12.5px;color:#111;transform:translate(-50%,-50%) rotate(-90deg);">Raw</div>
<div class="r" style="left:333px;top:92px;width:351px;height:222px;background:#fff;border:1px solid #8e8e8e;border-right:1px solid #c8c8c8;box-sizing:border-box;"></div>
<div class="r" style="left:332px;top:314px;width:352px;height:1px;background:#bdbdbd;"></div>
<div class="r" style="left:334px;top:93px;width:14px;height:203px;background:#fff;"></div>
<div class="r" style="left:347px;top:93px;width:1px;height:203px;background:#f0f0f0;"></div>
<div class="r" style="left:348px;top:172px;width:317px;height:15px;background:#e8eef9;"></div>
<div class="r" style="left:348px;top:93px;width:317px;height:203px;overflow:hidden;">
<div class="t" style="left:2.0px;top:4.39px;font-size:11.35px;line-height:11.35px;letter-spacing:0.14px;"><span style="color:#f03c3c">&lt;</span><span style="color:#4646f0">soapenv:Envelope</span><span style="color:#6aa0a0"> xmlns:soapenv</span><span style="color:#333">=</span><span style="color:#e040e0">"http://schemas.xmlsoap.org/soap/envelope/"</span><span style="color:#6aa0a0"> xmlns:xpr</span></div>
<div class="t" style="left:12.4px;top:19.99px;font-size:11.35px;line-height:11.35px;letter-spacing:0.14px;"><span style="color:#f03c3c">&lt;</span><span style="color:#4646f0">soapenv:Header</span><span style="color:#f03c3c">/&gt;</span></div>
<div class="t" style="left:12.4px;top:35.59px;font-size:11.35px;line-height:11.35px;letter-spacing:0.14px;"><span style="color:#f03c3c">&lt;</span><span style="color:#4646f0">soapenv:Body</span><span style="color:#f03c3c">&gt;</span></div>
<div class="t" style="left:22.8px;top:51.19px;font-size:11.35px;line-height:11.35px;letter-spacing:0.14px;"><span style="color:#f03c3c">&lt;</span><span style="color:#4646f0">xpr:Login</span><span style="color:#f03c3c">&gt;</span></div>
<div class="t" style="left:33.2px;top:66.79px;font-size:11.35px;line-height:11.35px;letter-spacing:0.14px;"><span style="color:#3e8e3e">&lt;!--Optional:--&gt;</span></div>
<div class="t" style="left:33.2px;top:82.39px;font-size:11.35px;line-height:11.35px;letter-spacing:0.14px;"><span style="color:#f03c3c">&lt;</span><span style="color:#4646f0">xpr:instanceId</span><span style="color:#f03c3c">&gt;</span><span style="color:#222">65CAE</span><span style="display:inline-block;width:0;height:0;position:relative;"><span style="position:absolute;left:0;top:-12px;width:1.6px;height:14px;background:#e02020;"></span></span><span style="color:#222">E49-B7DD-4F6C-BEEE-7FEB4A2C1D11</span></div>
<div class="t" style="left:33.2px;top:97.99px;font-size:11.35px;line-height:11.35px;letter-spacing:0.14px;"><span style="color:#3e8e3e">&lt;!--Optional:--&gt;</span></div>
<div class="t" style="left:33.2px;top:113.59px;font-size:11.35px;line-height:11.35px;letter-spacing:0.14px;"><span style="color:#f03c3c">&lt;</span><span style="color:#4646f0">xpr:currentToken</span><span style="color:#f03c3c">&gt;</span><span style="color:#222">eyJhbGciOiJSUzI1NiIsImtpZCI6IkNFRjQ1</span></div>
<div class="t" style="left:22.8px;top:129.19px;font-size:11.35px;line-height:11.35px;letter-spacing:0.14px;"><span style="color:#f03c3c">&lt;/</span><span style="color:#4646f0">xpr:Login</span><span style="color:#f03c3c">&gt;</span></div>
<div class="t" style="left:12.4px;top:144.79px;font-size:11.35px;line-height:11.35px;letter-spacing:0.14px;"><span style="color:#f03c3c">&lt;/</span><span style="color:#4646f0">soapenv:Body</span><span style="color:#f03c3c">&gt;</span></div>
<div class="t" style="left:2.0px;top:160.39px;font-size:11.35px;line-height:11.35px;letter-spacing:0.14px;"><span style="color:#f03c3c">&lt;/</span><span style="color:#4646f0">soapenv:Envelope</span><span style="color:#f03c3c">&gt;</span></div>
</div>
<div class="r" style="left:336px;top:96px;width:9px;height:9px;border:1px solid #8a8a8a;background:#fff;box-sizing:border-box;"></div>
<div class="r" style="left:338px;top:100px;width:5px;height:1px;background:#555;"></div>
<div class="r" style="left:336px;top:127px;width:9px;height:9px;border:1px solid #8a8a8a;background:#fff;box-sizing:border-box;"></div>
<div class="r" style="left:338px;top:131px;width:5px;height:1px;background:#555;"></div>
<div class="r" style="left:336px;top:143px;width:9px;height:9px;border:1px solid #8a8a8a;background:#fff;box-sizing:border-box;"></div>
<div class="r" style="left:338px;top:147px;width:5px;height:1px;background:#555;"></div>
<div class="r" style="left:665px;top:93px;width:16px;height:16px;background:linear-gradient(#fafafa,#e6e6e6);border:1px solid #b0b0b0;border-right-color:#a0a0a0;border-bottom-color:#a0a0a0;box-sizing:border-box;"></div>
<svg class="r" style="left:665px;top:93px;" width="16" height="16" viewBox="0 0 16 16"><polygon points="4.8,11.100000000000001 13.2,11.100000000000001 9.0,6.300000000000001" fill="#111" stroke="#111" stroke-width="0.6" stroke-linejoin="round"/></svg>
<div class="r" style="left:665px;top:109px;width:16px;height:110px;background:linear-gradient(90deg,#3f5f9f 0,#8aa6d9 1px,#6a8bc8 3px,#5578bb 60%,#4a6cb0 100%);border:1px solid #3f5f9f;box-sizing:border-box;"></div>
<svg class="r" style="left:668px;top:148px" width="10" height="32"><defs><pattern id="g8" width="4" height="4" patternUnits="userSpaceOnUse"><rect x="0" y="0" width="1" height="1" fill="#c0d0f4"/><rect x="2" y="2" width="1" height="1" fill="#c0d0f4"/><rect x="2" y="0" width="1" height="1" fill="#3f5fa5"/><rect x="0" y="2" width="1" height="1" fill="#3f5fa5"/></pattern></defs><rect width="10" height="32" fill="url(#g8)"/></svg>
<div class="r" style="left:665px;top:219px;width:16px;height:61px;background:#fff;border:1px solid #aaaaaa;border-top:none;border-bottom:none;box-sizing:border-box;"></div>
<div class="r" style="left:665px;top:280px;width:16px;height:16px;background:linear-gradient(#fafafa,#e6e6e6);border:1px solid #b0b0b0;border-right-color:#a0a0a0;border-bottom-color:#a0a0a0;box-sizing:border-box;"></div>
<svg class="r" style="left:665px;top:280px;" width="16" height="16" viewBox="0 0 16 16"><polygon points="4.8,6.500000000000001 13.2,6.500000000000001 9.0,11.3" fill="#111" stroke="#111" stroke-width="0.6" stroke-linejoin="round"/></svg>
<div class="r" style="left:348px;top:296px;width:16px;height:16px;background:linear-gradient(#fafafa,#e6e6e6);border:1px solid #b0b0b0;border-right-color:#a0a0a0;border-bottom-color:#a0a0a0;box-sizing:border-box;"></div>
<svg class="r" style="left:348px;top:296px;" width="16" height="16" viewBox="0 0 16 16"><polygon points="11.0,4.800000000000001 11.0,12.8 6.5,8.8" fill="#111" stroke="#111" stroke-width="0.6" stroke-linejoin="round"/></svg>
<div class="r" style="left:363px;top:296px;width:16px;height:16px;background:linear-gradient(#3f5f9f 0,#8aa6d9 1px,#6a8bc8 3px,#5578bb 60%,#4a6cb0 100%);border:1px solid #3f5f9f;box-sizing:border-box;"></div>
<svg class="r" style="left:366px;top:300px" width="10" height="9"><defs><pattern id="g9" width="4" height="4" patternUnits="userSpaceOnUse"><rect x="0" y="0" width="1" height="1" fill="#c0d0f4"/><rect x="2" y="2" width="1" height="1" fill="#c0d0f4"/><rect x="2" y="0" width="1" height="1" fill="#3f5fa5"/><rect x="0" y="2" width="1" height="1" fill="#3f5fa5"/></pattern></defs><rect width="10" height="9" fill="url(#g9)"/></svg>
<div class="r" style="left:379px;top:296px;width:270px;height:16px;background:#fff;border:1px solid #aaaaaa;border-left:none;border-right:none;box-sizing:border-box;"></div>
<div class="r" style="left:649px;top:296px;width:16px;height:16px;background:linear-gradient(#fafafa,#e6e6e6);border:1px solid #b0b0b0;border-right-color:#a0a0a0;border-bottom-color:#a0a0a0;box-sizing:border-box;"></div>
<svg class="r" style="left:649px;top:296px;" width="16" height="16" viewBox="0 0 16 16"><polygon points="7.0,4.800000000000001 7.0,12.8 11.5,8.8" fill="#111" stroke="#111" stroke-width="0.6" stroke-linejoin="round"/></svg>
<div class="r" style="left:665px;top:296px;width:16px;height:16px;background:linear-gradient(#fbfbfb,#e4e4e4);border:1px solid #b4b4b4;box-sizing:border-box;"></div>
<svg class="r" style="left:665px;top:296px;" width="16" height="16" viewBox="0 0 16 16"><rect x="3" y="3" width="8" height="8" fill="#fff" stroke="#e0a060" stroke-width="1"/><circle cx="9" cy="9" r="3.2" fill="none" stroke="#111" stroke-width="1.5"/></svg>
<div class="r" style="left:683px;top:88px;width:1px;height:392px;background:#c6c6c6;"></div>
<div class="r" style="left:694px;top:88px;width:1px;height:392px;background:#c6c6c6;"></div>
<svg class="r" style="left:685px;top:91px;" width="10" height="20" viewBox="0 0 10 20"><path d="M7,2 L3,5 L7,8" stroke="#000" stroke-width="2.4" fill="none" stroke-linecap="round"/><path d="M3,12 L7,15 L3,18" stroke="#000" stroke-width="2.4" fill="none" stroke-linecap="round"/></svg>
<div class="r" style="left:698px;top:92px;width:20px;height:39px;background:#f5f5f5;border:1px solid #a6a6a6;border-right:none;box-sizing:border-box;clip-path:polygon(0 6px,6px 0,100% 0,100% 100%,0 100%);"></div>
<svg class="r" style="left:698px;top:92px;" width="20" height="39"><path d="M0.5,6.5 L6.5,0.5" stroke="#a6a6a6" stroke-width="1"/></svg>
<div class="t" style="left:708.0px;top:111.5px;font-size:12.5px;line-height:12.5px;color:#111;transform:translate(-50%,-50%) rotate(-90deg);">XML</div>
<div class="r" style="left:698px;top:130px;width:20px;height:35px;background:#d2d2d2;border:1px solid #a6a6a6;border-right:none;box-sizing:border-box;clip-path:polygon(0 6px,6px 0,100% 0,100% 100%,0 100%);"></div>
<svg class="r" style="left:698px;top:130px;" width="20" height="35"><path d="M0.5,6.5 L6.5,0.5" stroke="#a6a6a6" stroke-width="1"/></svg>
<div class="t" style="left:708.0px;top:147.5px;font-size:12.5px;line-height:12.5px;color:#111;transform:translate(-50%,-50%) rotate(-90deg);">Raw</div>
<div class="r" style="left:719px;top:92px;width:440px;height:365px;background:#fff;border:1px solid #8e8e8e;border-right:1px solid #b8b8b8;box-sizing:border-box;"></div>
<div class="r" style="left:717px;top:458px;width:444px;height:1px;background:#bdbdbd;"></div>
<div class="r" style="left:734px;top:93px;width:1px;height:347px;background:#f0f0f0;"></div>
<div class="r" style="left:735px;top:93px;width:407px;height:347px;overflow:hidden;">
<div class="r" style="left:1px;top:0.30px;height:15.8px;width:345.1px;background:#c8c8f7;"></div>
<div class="t" style="left:1.0px;top:4.33px;font-size:11.3px;line-height:11.3px;color:#2c2c3c;">&lt;s:Envelope xmlns:s="http://schemas.xmlsoap.org/soap/envelope/"&gt;</div>
<div class="r" style="left:1px;top:15.90px;height:15.8px;width:60.1px;background:#c8c8f7;"></div>
<div class="t" style="left:11.4px;top:19.93px;font-size:11.3px;line-height:11.3px;color:#2c2c3c;">&lt;s:Body&gt;</div>
<div class="r" style="left:1px;top:31.50px;height:15.8px;width:404.9px;background:#c8c8f7;"></div>
<div class="t" style="left:21.8px;top:35.53px;font-size:11.3px;line-height:11.3px;color:#2c2c3c;">&lt;LoginResponse xmlns="http://videoos.net/2/XProtectCSServerCommand"&gt;</div>
<div class="r" style="left:1px;top:47.10px;height:15.8px;width:390.1px;background:#c8c8f7;"></div>
<div class="t" style="left:32.2px;top:51.13px;font-size:11.3px;line-height:11.3px;color:#2c2c3c;">&lt;LoginResult xmlns:i="http://www.w3.org/2001/XMLSchema-instance"&gt;</div>
<div class="r" style="left:1px;top:62.70px;height:15.8px;width:374.4px;background:#c8c8f7;"></div>
<div class="t" style="left:42.6px;top:66.73px;font-size:11.3px;line-height:11.3px;color:#2c2c3c;">&lt;RegistrationTime&gt;2025-01-14T06:44:31.45Z&lt;/RegistrationTime&gt;</div>
<div class="r" style="left:1px;top:78.30px;height:15.8px;width:114.2px;background:#c8c8f7;"></div>
<div class="t" style="left:42.6px;top:82.33px;font-size:11.3px;line-height:11.3px;color:#2c2c3c;">&lt;TimeToLive&gt;</div>
<div class="r" style="left:1px;top:93.90px;height:15.8px;width:295.9px;background:#c8c8f7;"></div>
<div class="t" style="left:53.0px;top:97.93px;font-size:11.3px;line-height:11.3px;color:#2c2c3c;">&lt;MicroSeconds&gt;14400000000&lt;/MicroSeconds&gt;</div>
<div class="r" style="left:1px;top:109.50px;height:15.8px;width:117.3px;background:#c8c8f7;"></div>
<div class="t" style="left:42.6px;top:113.53px;font-size:11.3px;line-height:11.3px;color:#2c2c3c;">&lt;/TimeToLive&gt;</div>
<div class="r" style="left:1px;top:125.10px;height:15.8px;width:284.6px;background:#c8c8f7;"></div>
<div class="t" style="left:42.6px;top:129.13px;font-size:11.3px;line-height:11.3px;color:#2c2c3c;">&lt;TimeToLiveLimited&gt;false&lt;/TimeToLiveLimited&gt;</div>
<div class="r" style="left:1px;top:140.70px;height:15.8px;width:490.9px;background:#c8c8f7;"></div>
<div class="t" style="left:42.6px;top:144.73px;font-size:11.3px;line-height:11.3px;color:#2c2c3c;">&lt;Token&gt;TOKEN#c4faf55b-074b-4326-9e0a-31e2abb67867#istpcctv39v.thy.com&lt;/Token&gt;</div>
<div class="r" style="left:1px;top:156.30px;height:15.8px;width:109.2px;background:#c8c8f7;"></div>
<div class="t" style="left:32.2px;top:160.33px;font-size:11.3px;line-height:11.3px;color:#2c2c3c;">&lt;/LoginResult&gt;</div>
<div class="r" style="left:1px;top:171.90px;height:15.8px;width:117.7px;background:#c8c8f7;"></div>
<div class="t" style="left:21.8px;top:175.93px;font-size:11.3px;line-height:11.3px;color:#2c2c3c;">&lt;/LoginResponse&gt;</div>
<div class="r" style="left:1px;top:187.50px;height:15.8px;width:63.3px;background:#c8c8f7;"></div>
<div class="t" style="left:11.4px;top:191.53px;font-size:11.3px;line-height:11.3px;color:#2c2c3c;">&lt;/s:Body&gt;</div>
<div class="r" style="left:1px;top:203.10px;height:15.8px;width:74.2px;background:#c8c8f7;"></div>
<div class="t" style="left:1.0px;top:207.13px;font-size:11.3px;line-height:11.3px;color:#2c2c3c;">&lt;/s:Envelope&gt;</div>
</div>
<div class="r" style="left:723px;top:96px;width:9px;height:9px;border:1px solid #8a8a8a;background:#fff;box-sizing:border-box;"></div>
<div class="r" style="left:725px;top:100px;width:5px;height:1px;background:#555;"></div>
<div class="r" style="left:723px;top:112px;width:9px;height:9px;border:1px solid #8a8a8a;background:#fff;box-sizing:border-box;"></div>
<div class="r" style="left:725px;top:116px;width:5px;height:1px;background:#555;"></div>
<div class="r" style="left:723px;top:127px;width:9px;height:9px;border:1px solid #8a8a8a;background:#fff;box-sizing:border-box;"></div>
<div class="r" style="left:725px;top:131px;width:5px;height:1px;background:#555;"></div>
<div class="r" style="left:723px;top:143px;width:9px;height:9px;border:1px solid #8a8a8a;background:#fff;box-sizing:border-box;"></div>
<div class="r" style="left:725px;top:147px;width:5px;height:1px;background:#555;"></div>
<div class="r" style="left:723px;top:174px;width:9px;height:9px;border:1px solid #8a8a8a;background:#fff;box-sizing:border-box;"></div>
<div class="r" style="left:725px;top:178px;width:5px;height:1px;background:#555;"></div>
<div class="r" style="left:1142px;top:92px;width:16px;height:17px;background:linear-gradient(#fafafa,#e6e6e6);border:1px solid #b0b0b0;border-right-color:#a0a0a0;border-bottom-color:#a0a0a0;box-sizing:border-box;"></div>
<svg class="r" style="left:1142px;top:92px;" width="16" height="17" viewBox="0 0 16 17"><polygon points="4.8,11.600000000000001 13.2,11.600000000000001 9.0,6.800000000000001" fill="#111" stroke="#111" stroke-width="0.6" stroke-linejoin="round"/></svg>
<div class="r" style="left:1142px;top:109px;width:16px;height:314px;background:#fff;border:1px solid #aaaaaa;border-top:none;border-bottom:none;box-sizing:border-box;"></div>
<div class="r" style="left:1142px;top:423px;width:16px;height:17px;background:linear-gradient(#fafafa,#e6e6e6);border:1px solid #b0b0b0;border-right-color:#a0a0a0;border-bottom-color:#a0a0a0;box-sizing:border-box;"></div>
<svg class="r" style="left:1142px;top:423px;" width="16" height="17" viewBox="0 0 16 17"><polygon points="4.8,7.000000000000001 13.2,7.000000000000001 9.0,11.8" fill="#111" stroke="#111" stroke-width="0.6" stroke-linejoin="round"/></svg>
<div class="r" style="left:735px;top:440px;width:16px;height:16px;background:linear-gradient(#fafafa,#e6e6e6);border:1px solid #b0b0b0;border-right-color:#a0a0a0;border-bottom-color:#a0a0a0;box-sizing:border-box;"></div>
<svg class="r" style="left:735px;top:440px;" width="16" height="16" viewBox="0 0 16 16"><polygon points="11.0,4.800000000000001 11.0,12.8 6.5,8.8" fill="#111" stroke="#111" stroke-width="0.6" stroke-linejoin="round"/></svg>
<div class="r" style="left:750px;top:440px;width:237px;height:16px;background:linear-gradient(#3f5f9f 0,#8aa6d9 1px,#6a8bc8 3px,#5578bb 60%,#4a6cb0 100%);border:1px solid #3f5f9f;box-sizing:border-box;"></div>
<svg class="r" style="left:852px;top:444px" width="32" height="9"><defs><pattern id="g10" width="4" height="4" patternUnits="userSpaceOnUse"><rect x="0" y="0" width="1" height="1" fill="#c0d0f4"/><rect x="2" y="2" width="1" height="1" fill="#c0d0f4"/><rect x="2" y="0" width="1" height="1" fill="#3f5fa5"/><rect x="0" y="2" width="1" height="1" fill="#3f5fa5"/></pattern></defs><rect width="32" height="9" fill="url(#g10)"/></svg>
<div class="r" style="left:987px;top:440px;width:138px;height:16px;background:#fff;border:1px solid #aaaaaa;border-left:none;border-right:none;box-sizing:border-box;"></div>
<div class="r" style="left:1125px;top:440px;width:16px;height:16px;background:linear-gradient(#fafafa,#e6e6e6);border:1px solid #b0b0b0;border-right-color:#a0a0a0;border-bottom-color:#a0a0a0;box-sizing:border-box;"></div>
<svg class="r" style="left:1125px;top:440px;" width="16" height="16" viewBox="0 0 16 16"><polygon points="7.0,4.800000000000001 7.0,12.8 11.5,8.8" fill="#111" stroke="#111" stroke-width="0.6" stroke-linejoin="round"/></svg>
<div class="r" style="left:1141px;top:440px;width:17px;height:16px;background:linear-gradient(#fbfbfb,#e4e4e4);border:1px solid #b4b4b4;box-sizing:border-box;"></div>
<svg class="r" style="left:1141px;top:440px;" width="16" height="16" viewBox="0 0 16 16"><rect x="3" y="3" width="8" height="8" fill="#fff" stroke="#e0a060" stroke-width="1"/><circle cx="9" cy="9" r="3.2" fill="none" stroke="#111" stroke-width="1.5"/></svg>
<div class="r" style="left:1188px;top:104px;width:18px;height:39px;background:#f5f5f5;border:1px solid #a6a6a6;border-right:none;box-sizing:border-box;clip-path:polygon(0 6px,6px 0,100% 0,100% 100%,0 100%);"></div>
<svg class="r" style="left:1188px;top:104px;" width="18" height="39"><path d="M0.5,6.5 L6.5,0.5" stroke="#a6a6a6" stroke-width="1"/></svg>
<div class="t" style="left:1197.0px;top:123.5px;font-size:12.5px;line-height:12.5px;color:#111;transform:translate(-50%,-50%) rotate(-90deg);">XML</div>
<div class="r" style="left:1188px;top:142px;width:18px;height:35px;background:#d2d2d2;border:1px solid #a6a6a6;border-right:none;box-sizing:border-box;clip-path:polygon(0 6px,6px 0,100% 0,100% 100%,0 100%);"></div>
<svg class="r" style="left:1188px;top:142px;" width="18" height="35"><path d="M0.5,6.5 L6.5,0.5" stroke="#a6a6a6" stroke-width="1"/></svg>
<div class="t" style="left:1197.0px;top:159.5px;font-size:12.5px;line-height:12.5px;color:#111;transform:translate(-50%,-50%) rotate(-90deg);">Raw</div>
<div class="r" style="left:314px;top:321px;width:370px;height:1px;background:#a8a8a8;"></div>
<div class="t " style="left:337px;top:339.36px;font-size:12.8px;line-height:12.8px;color:#1a1a1a;font-weight:normal;">Authorization:</div>
<div class="r" style="left:456px;top:333px;width:162px;height:24px;background:linear-gradient(#ffffff 0%,#fbfbfb 55%,#e6e6e6 100%);border:1px solid #8c8c8c;border-radius:3px;box-sizing:border-box;"></div>
<div class="t " style="left:460px;top:339.12px;font-size:12.5px;line-height:12.5px;color:#1a1a1a;font-weight:normal;">Basic</div>
<svg class="r" style="left:602px;top:340px;" width="14" height="10" viewBox="0 0 14 10"><polygon points="2,2 12,2 7,7" fill="#333"/></svg>
<div class="r" style="left:331px;top:367px;width:337px;height:81px;background:#e4e4e4;border-top:2px solid #8f8f8f;border-left:1px solid #8f8f8f;box-sizing:border-box;"></div>
<div class="t " style="left:348.5px;top:396.34px;font-size:12px;line-height:12px;color:#1a1a1a;font-weight:normal;">Username:</div>
<div class="t " style="left:348.5px;top:425.84px;font-size:12px;line-height:12px;color:#1a1a1a;font-weight:normal;">Password:</div>
<div class="r" style="left:490px;top:389.5px;width:180px;height:24px;background:#fff;border:1px solid #a0a0a0;box-sizing:border-box;"></div>
<div class="r" style="left:490px;top:419px;width:180px;height:24px;background:#fff;border:1px solid #a0a0a0;box-sizing:border-box;"></div>
<div class="t " style="left:494px;top:395.42px;font-size:12.5px;line-height:12.5px;color:#1a1a1a;font-weight:normal;">API</div>
<svg class="r" style="left:495px;top:429px;" width="60" height="6" viewBox="0 0 60 6"><circle cx="3.0" cy="3" r="2.6" fill="#000"/><circle cx="10.1" cy="3" r="2.6" fill="#000"/><circle cx="17.2" cy="3" r="2.6" fill="#000"/><circle cx="24.299999999999997" cy="3" r="2.6" fill="#000"/><circle cx="31.4" cy="3" r="2.6" fill="#000"/><circle cx="38.5" cy="3" r="2.6" fill="#000"/><circle cx="45.599999999999994" cy="3" r="2.6" fill="#000"/><circle cx="52.699999999999996" cy="3" r="2.6" fill="#000"/></svg>
<div class="r" style="left:668px;top:322px;width:16px;height:16px;background:linear-gradient(#fafafa,#e6e6e6);border:1px solid #b0b0b0;border-right-color:#a0a0a0;border-bottom-color:#a0a0a0;box-sizing:border-box;"></div>
<svg class="r" style="left:668px;top:322px;" width="16" height="16" viewBox="0 0 16 16"><polygon points="4.8,11.100000000000001 13.2,11.100000000000001 9.0,6.300000000000001" fill="#111" stroke="#111" stroke-width="0.6" stroke-linejoin="round"/></svg>
<div class="r" style="left:668px;top:338px;width:16px;height:38px;background:linear-gradient(90deg,#3f5f9f 0,#8aa6d9 1px,#6a8bc8 3px,#5578bb 60%,#4a6cb0 100%);border:1px solid #3f5f9f;box-sizing:border-box;"></div>
<svg class="r" style="left:671px;top:341px" width="10" height="32"><defs><pattern id="g11" width="4" height="4" patternUnits="userSpaceOnUse"><rect x="0" y="0" width="1" height="1" fill="#c0d0f4"/><rect x="2" y="2" width="1" height="1" fill="#c0d0f4"/><rect x="2" y="0" width="1" height="1" fill="#3f5fa5"/><rect x="0" y="2" width="1" height="1" fill="#3f5fa5"/></pattern></defs><rect width="10" height="32" fill="url(#g11)"/></svg>
<div class="r" style="left:668px;top:376px;width:16px;height:56px;background:#fff;border:1px solid #aaaaaa;border-top:none;border-bottom:none;box-sizing:border-box;"></div>
<div class="r" style="left:668px;top:431px;width:16px;height:16px;background:linear-gradient(#fafafa,#e6e6e6);border:1px solid #b0b0b0;border-right-color:#a0a0a0;border-bottom-color:#a0a0a0;box-sizing:border-box;"></div>
<svg class="r" style="left:668px;top:431px;" width="16" height="16" viewBox="0 0 16 16"><polygon points="4.8,6.500000000000001 13.2,6.500000000000001 9.0,11.3" fill="#111" stroke="#111" stroke-width="0.6" stroke-linejoin="round"/></svg>
<div class="r" style="left:314px;top:448px;width:13px;height:16px;background:linear-gradient(#fafafa,#e6e6e6);border:1px solid #b0b0b0;border-right-color:#a0a0a0;border-bottom-color:#a0a0a0;box-sizing:border-box;"></div>
<svg class="r" style="left:314px;top:448px;" width="13" height="16" viewBox="0 0 13 16"><polygon points="9.5,4.800000000000001 9.5,12.8 5.0,8.8" fill="#111" stroke="#111" stroke-width="0.6" stroke-linejoin="round"/></svg>
<div class="r" style="left:327px;top:448px;width:204px;height:16px;background:linear-gradient(#3f5f9f 0,#8aa6d9 1px,#6a8bc8 3px,#5578bb 60%,#4a6cb0 100%);border:1px solid #3f5f9f;box-sizing:border-box;"></div>
<svg class="r" style="left:413px;top:452px" width="32" height="9"><defs><pattern id="g12" width="4" height="4" patternUnits="userSpaceOnUse"><rect x="0" y="0" width="1" height="1" fill="#c0d0f4"/><rect x="2" y="2" width="1" height="1" fill="#c0d0f4"/><rect x="2" y="0" width="1" height="1" fill="#3f5fa5"/><rect x="0" y="2" width="1" height="1" fill="#3f5fa5"/></pattern></defs><rect width="32" height="9" fill="url(#g12)"/></svg>
<div class="r" style="left:531px;top:448px;width:121px;height:16px;background:#fff;border:1px solid #aaaaaa;border-left:none;border-right:none;box-sizing:border-box;"></div>
<div class="r" style="left:652px;top:448px;width:16px;height:16px;background:linear-gradient(#fafafa,#e6e6e6);border:1px solid #b0b0b0;border-right-color:#a0a0a0;border-bottom-color:#a0a0a0;box-sizing:border-box;"></div>
<svg class="r" style="left:652px;top:448px;" width="16" height="16" viewBox="0 0 16 16"><polygon points="7.0,4.800000000000001 7.0,12.8 11.5,8.8" fill="#111" stroke="#111" stroke-width="0.6" stroke-linejoin="round"/></svg>
<div class="r" style="left:322px;top:466px;width:56px;height:20px;background:#fff;border:1px solid #9a9a9a;border-radius:3px 3px 0 0;box-sizing:border-box;"></div>
<svg class="r" style="left:329px;top:469px;" width="14" height="12" viewBox="0 0 14 12"><path d="M4,6 V4.5 A3,3 0 0 1 10,4.5 V6" stroke="#0a0a0a" stroke-width="2.2" fill="none"/><rect x="2" y="6" width="10" height="8" rx="1" fill="#0a0a0a"/></svg>
<div class="t " style="left:350.5px;top:473.34px;font-size:12px;line-height:12px;color:#1a1a1a;font-weight:normal;">Au</div>
<div class="t " style="left:391.6px;top:473.34px;font-size:12px;line-height:12px;color:#1a1a1a;font-weight:normal;">Hea</div>
<div class="t " style="left:440px;top:473.34px;font-size:12px;line-height:12px;color:#1a1a1a;font-weight:normal;">Attach</div>
<div class="t " style="left:712.5px;top:473.34px;font-size:12px;line-height:12px;color:#1a1a1a;font-weight:normal;">Headers (9)</div>
<div class="t " style="left:790px;top:473.34px;font-size:12px;line-height:12px;color:#1a1a1a;font-weight:normal;">Attachments (0)</div>
<div class="t " style="left:889.5px;top:473.34px;font-size:12px;line-height:12px;color:#1a1a1a;font-weight:normal;">SSL Info (2 certs)</div>
<div class="t " style="left:995px;top:473.34px;font-size:12px;line-height:12px;color:#a8a8a8;font-weight:normal;">WSS (0)</div>
<div class="t " style="left:1052.5px;top:473.34px;font-size:12px;line-height:12px;color:#a8a8a8;font-weight:normal;">JMS (0)</div>
<div class="r" style="left:661px;top:453px;width:1px;height:7px;background:#8a8a8a;"></div>
<div class="r" style="left:506.5px;top:459.5px;width:194px;height:30px;background:#2c2c2c;border-radius:5px;"></div>
<svg class="r" style="left:506.5px;top:459.5px;" width="194" height="21" viewBox="0 0 194 21"><circle cx="18.5" cy="18.5" r="6.3" fill="none" stroke="#d8d8d8" stroke-width="1.4"/><path d="M15,18.5 H22" stroke="#d8d8d8" stroke-width="1.5"/><circle cx="57" cy="18.5" r="6.3" fill="none" stroke="#d8d8d8" stroke-width="1.4"/><path d="M53.5,18.5 H60.5 M57,15 V22" stroke="#d8d8d8" stroke-width="1.5"/><path d="M94.5,17.5 L90,13 M90,13 H94 M90,13 V17 M100,17.5 L104.5,13 M104.5,13 H100.5 M104.5,13 V17" stroke="#d8d8d8" stroke-width="1.6" fill="none"/><rect x="130" y="13.5" width="14" height="12" rx="1" fill="none" stroke="#d8d8d8" stroke-width="1.4"/><path d="M135,12.5 H139" stroke="#d8d8d8" stroke-width="1.4"/><polygon points="135,17 135,23 140,20" fill="#d8d8d8"/><path d="M155,0 V22" stroke="#8a8a8a" stroke-width="1"/><rect x="169.5" y="12.7" width="12.5" height="16" rx="2" fill="none" stroke="#d8d8d8" stroke-width="1.4"/></svg>
</body></html>
